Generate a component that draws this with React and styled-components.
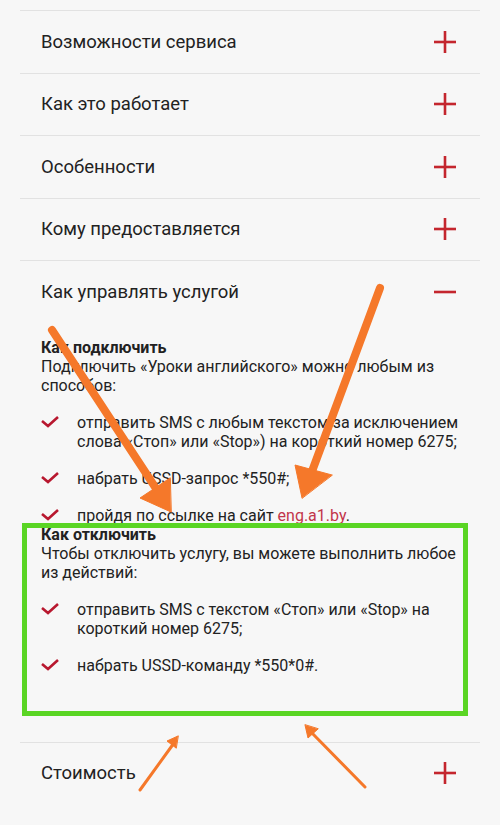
import React from "react";
import styled, { createGlobalStyle } from "styled-components";

const Global = createGlobalStyle`
  html, body {
    margin: 0;
    padding: 0;
    background: #f7f7f7;
  }
  body {
    font-family: Roboto, "Noto Sans", sans-serif;
    color: #222;
  }
`;

const Page = styled.div`
  position: relative;
  width: 500px;
  height: 825px;
  overflow: hidden;
  background: #f7f7f7;
  padding: 10px 20px 0;
  box-sizing: border-box;
`;

const Item = styled.div`
  border-top: 1px solid #e2e2e2;
  &:last-child {
    border-bottom: 1px solid #e2e2e2;
  }
`;

const Header = styled.div`
  height: 61.5px;
  display: flex;
  align-items: center;
  justify-content: space-between;
  padding: 0 23px 0 21px;
`;

const Title = styled.span`
  font-size: 18.5px;
  color: #222;
`;

const Body = styled.div`
  padding: 15px 20px 67px 21px;
  font-size: 16px;
  line-height: 19px;
`;

const SubTitle = styled.div`
  font-weight: 700;
`;

const List = styled.ul`
  list-style: none;
  margin: 0;
  padding: 0;
`;

const Li = styled.li`
  display: flex;
  align-items: flex-start;
  margin-top: 18px;
`;

const Check = styled.span`
  flex: 0 0 36px;
  height: 19px;
  display: flex;
  align-items: center;
`;

const Link = styled.span`
  color: #c2354a;
`;

const Overlay = styled.svg`
  position: absolute;
  left: 0;
  top: 0;
  pointer-events: none;
`;

const Plus = ({ open }) => (
  <svg width="24" height="24" viewBox="0 0 24 24">
    <path d="M1 12h22" stroke="#c4262e" strokeWidth="2.6" />
    {!open && <path d="M12 1v22" stroke="#c4262e" strokeWidth="2.6" />}
  </svg>
);

const CheckIcon = () => (
  <svg width="18" height="12" viewBox="0 0 18 12">
    <path d="M1 5l6 5L17 1" fill="none" stroke="#b8182f" strokeWidth="2.6" />
  </svg>
);

const Point = ({ children }) => (
  <Li>
    <Check><CheckIcon /></Check>
    <span>{children}</span>
  </Li>
);

const closed = ["Возможности сервиса", "Как это работает", "Особенности", "Кому предоставляется"];

export default function App() {
  return (
    <>
      <Global />
      <Page>
        {closed.map(t => (
          <Item key={t}>
            <Header>
              <Title>{t}</Title>
              <Plus />
            </Header>
          </Item>
        ))}
        <Item>
          <Header>
            <Title>Как управлять услугой</Title>
            <Plus open />
          </Header>
          <Body>
            <SubTitle>Как подключить</SubTitle>
            <div>Подключить «Уроки английского» можно любым из способов:</div>
            <List>
              <Point>отправить SMS с любым текстом за исключением слова «Стоп» или «Stop») на короткий номер 6275;</Point>
              <Point>набрать USSD-запрос *550#;</Point>
              <Point>пройдя по ссылке на сайт <Link>eng.a1.by</Link>.</Point>
            </List>
            <SubTitle>Как отключить</SubTitle>
            <div>Чтобы отключить услугу, вы можете выполнить любое из действий:</div>
            <List>
              <Point>отправить SMS с текстом «Стоп» или «Stop» на короткий номер 6275;</Point>
              <Point>набрать USSD-команду *550*0#.</Point>
            </List>
          </Body>
        </Item>
        <Item>
          <Header>
            <Title>Стоимость</Title>
            <Plus />
          </Header>
        </Item>
        <Overlay width="500" height="825" viewBox="0 0 500 825">
          <rect x="24.5" y="525.5" width="441" height="188" fill="none" stroke="#5ad524" strokeWidth="5" />
          <g fill="#f5782a" stroke="#f5782a" strokeLinecap="round">
            <line x1="52" y1="330" x2="157" y2="490" strokeWidth="8" />
            <polygon points="171,512 140,498 170,478" strokeWidth="1" />
            <line x1="380" y1="288" x2="311" y2="474" strokeWidth="8" />
            <polygon points="302,498 295,465 332,475" strokeWidth="1" />
            <line x1="140" y1="790" x2="174" y2="743" strokeWidth="3" />
            <polygon points="178,736 167,741 176,748" strokeWidth="1" />
            <line x1="365" y1="787" x2="311" y2="732" strokeWidth="3" />
            <polygon points="305,725 308,738 318,729" strokeWidth="1" />
          </g>
        </Overlay>
      </Page>
    </>
  );
}
